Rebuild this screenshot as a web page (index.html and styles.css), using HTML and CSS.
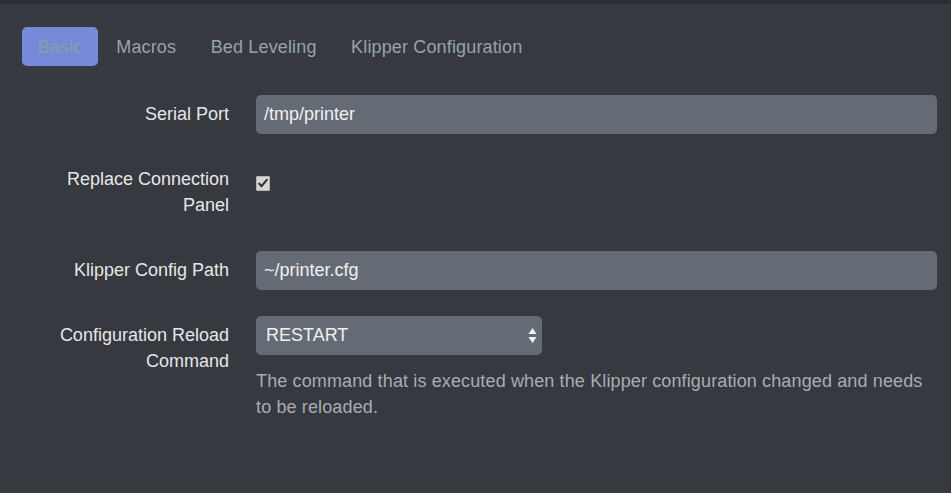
FILE: index.html
```html
<!DOCTYPE html>
<html lang="en">
<head>
<meta charset="utf-8">
<title>Klipper Settings</title>
<link rel="stylesheet" href="styles.css">
</head>
<body>
<div class="topbar"></div>
<div class="page">
  <nav class="tabs">
    <span class="tab active">Basic</span>
    <span class="tab">Macros</span>
    <span class="tab">Bed Leveling</span>
    <span class="tab">Klipper Configuration</span>
  </nav>
  <form class="form">
    <div class="row">
      <label class="label">Serial Port</label>
      <div class="control"><div class="input">/tmp/printer</div></div>
    </div>
    <div class="row">
      <label class="label">Replace Connection Panel</label>
      <div class="control">
        <span class="checkbox"><svg width="14" height="15" viewBox="0 0 14 15"><path d="M3.2 7.6 L5.6 10.2 L10.8 3.9" fill="none" stroke="#2d2f33" stroke-width="2.1" stroke-linecap="round" stroke-linejoin="round"/></svg></span>
      </div>
    </div>
    <div class="row">
      <label class="label">Klipper Config Path</label>
      <div class="control"><div class="input">~/printer.cfg</div></div>
    </div>
    <div class="row">
      <label class="label">Configuration Reload Command</label>
      <div class="control">
        <div class="select"><span>RESTART</span><svg width="9" height="17" viewBox="0 0 9 17"><path d="M4.5 1 L8.5 7 L0.5 7 Z" fill="#f2f2f2"/><path d="M4.5 16 L8.5 10 L0.5 10 Z" fill="#f2f2f2"/></svg></div>
        <p class="help">The command that is executed when the Klipper configuration changed and needs to be reloaded.</p>
      </div>
    </div>
  </form>
</div>
</body>
</html>
```

FILE: styles.css
```css
html, body {
  margin: 0;
  padding: 0;
  background: #363940;
  font-family: "Liberation Sans", Arial, sans-serif;
  font-size: 18px;
  height: 100%;
}
.topbar {
  height: 4px;
  background: #2b2d32;
}
.page {
  padding: 23px 14px 0 22px;
}
.tabs {
  display: flex;
  gap: 2.5px;
  height: 39px;
  align-items: stretch;
}
.tab {
  display: flex;
  align-items: center;
  padding: 0 16px;
  color: #97a3a9;
  border-radius: 5px;
  line-height: 1;
  letter-spacing: 0.15px;
}
.tab.active {
  background: #7689d9;
  color: #8b9da8;
  padding: 0 15.5px;
}
.form {
  margin-top: 29px;
}
.row {
  display: flex;
  margin-bottom: 26px;
}
.label {
  width: 207px;
  flex: none;
  text-align: right;
  color: #e6e6e6;
  line-height: 26px;
  padding: 6px 0 7px;
}
.control {
  margin-left: 27px;
  flex: 1;
}
.input {
  height: 39px;
  box-sizing: border-box;
  background: #656b74;
  border-radius: 5px;
  padding: 0 8px;
  display: flex;
  align-items: center;
  color: #f0f0f0;
}
.checkbox {
  display: block;
  width: 14px;
  height: 15px;
  margin-top: 16px;
  background: #d6d6d6;
  border-radius: 2px;
  box-shadow: inset 0 0 0 1px #b5b5b5;
}
.checkbox svg {
  display: block;
}
.select {
  width: 286px;
  height: 39px;
  box-sizing: border-box;
  background: #656b74;
  border-radius: 5px;
  padding: 0 5px 0 10px;
  display: flex;
  align-items: center;
  justify-content: space-between;
  color: #f0f0f0;
}
.select svg {
  display: block;
}
.help {
  margin: 13px 0 0;
  color: #a9acb1;
  font-size: 18px;
  letter-spacing: 0.13px;
  line-height: 26px;
}
```
